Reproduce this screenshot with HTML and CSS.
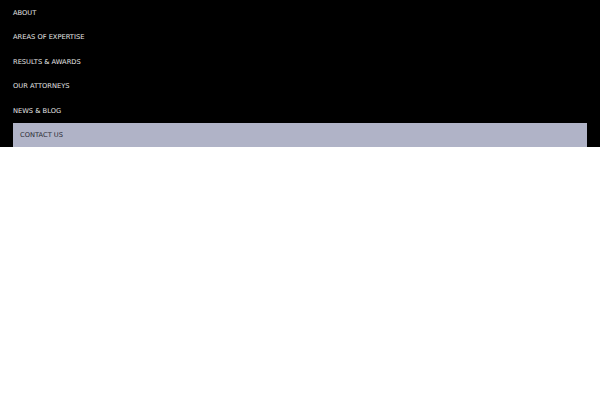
FILE: index.html
```html
<!DOCTYPE html>
<html>
<head>
<meta charset="utf-8">
<link rel="stylesheet" href="styles.css">
</head>
<body>
<nav class="menu">
  <ul class="menu-list">
    <li class="menu-item"><a href="#">About</a></li>
    <li class="menu-item"><a href="#">Areas of Expertise</a></li>
    <li class="menu-item"><a href="#">Results &amp; Awards</a></li>
    <li class="menu-item"><a href="#">Our Attorneys</a></li>
    <li class="menu-item"><a href="#">News &amp; Blog</a></li>
    <li class="menu-item menu-item--contact"><a href="#">Contact Us</a></li>
  </ul>
</nav>
</body>
</html>
```
FILE: styles.css
```css
html, body {
  margin: 0;
  padding: 0;
  background: #ffffff;
}
.menu {
  background: #000000;
  padding: 0 13px;
}
.menu-list {
  list-style: none;
  margin: 0;
  padding: 0;
  display: flex;
  flex-direction: column;
}
.menu-item {
  box-sizing: border-box;
  height: 24.5px;
  padding-top: 1px;
  display: flex;
  align-items: center;
}
.menu-item a {
  font-family: "DejaVu Sans", sans-serif;
  font-size: 6.7px;
  text-transform: uppercase;
  color: #e6e6e6;
  text-decoration: none;
}
.menu-item--contact {
  background: #b0b3c7;
  padding-left: 7px;
}
.menu-item--contact a {
  color: #2a2a33;
}
```
